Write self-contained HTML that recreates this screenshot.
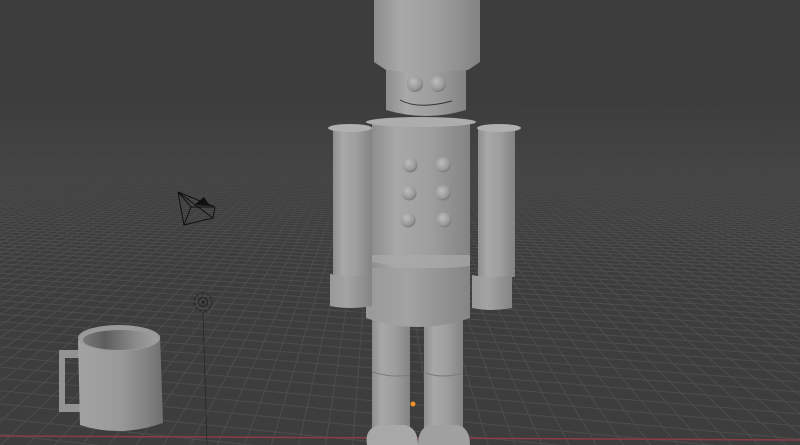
<!DOCTYPE html>
<html><head><meta charset="utf-8"><style>
html,body{margin:0;padding:0;background:#3d3d3d;width:800px;height:445px;overflow:hidden}
svg{display:block;position:absolute;left:0;top:0;overflow:hidden}
</style></head><body>
<svg id="s" width="800" height="445" viewBox="0 0 800 445" xmlns="http://www.w3.org/2000/svg">
<defs>
<linearGradient id="fg" gradientUnits="userSpaceOnUse" x1="0" y1="95" x2="0" y2="240">
<stop offset="0" stop-color="#fff" stop-opacity="0"/><stop offset="1" stop-color="#fff" stop-opacity="1"/></linearGradient>
<mask id="m"><rect x="0" y="0" width="800" height="445" fill="url(#fg)"/></mask>
<linearGradient id="cyl" x1="0" y1="0" x2="1" y2="0">
<stop offset="0" stop-color="#8e8e8e"/><stop offset="0.25" stop-color="#a8a8a8"/><stop offset="0.6" stop-color="#9e9e9e"/><stop offset="1" stop-color="#838383"/></linearGradient>
<linearGradient id="cyl2" x1="0" y1="0" x2="1" y2="0">
<stop offset="0" stop-color="#999"/><stop offset="0.4" stop-color="#a3a3a3"/><stop offset="1" stop-color="#858585"/></linearGradient>
<linearGradient id="mug" x1="0" y1="0" x2="1" y2="0">
<stop offset="0" stop-color="#a3a3a3"/><stop offset="0.5" stop-color="#999"/><stop offset="0.8" stop-color="#838383"/><stop offset="1" stop-color="#6f6f6f"/></linearGradient>
<linearGradient id="mugin" x1="0" y1="0" x2="1" y2="0">
<stop offset="0" stop-color="#777"/><stop offset="0.3" stop-color="#5e5e5e"/><stop offset="0.7" stop-color="#8a8a8a"/><stop offset="1" stop-color="#a0a0a0"/></linearGradient>
<radialGradient id="btn" cx="0.4" cy="0.35" r="0.7"><stop offset="0" stop-color="#bdbdbd"/><stop offset="0.7" stop-color="#989898"/><stop offset="1" stop-color="#707070"/></radialGradient>
</defs>
<g id="grid" mask="url(#m)" stroke="#4d4d4d" stroke-width="1"></g>
<line x1="0" y1="436" x2="800" y2="440" stroke="#8a3c48" stroke-width="1.5"/>
<line x1="203" y1="312" x2="207" y2="445" stroke="#2a2a2a" stroke-width="0.8"/>
<g fill="none" stroke="#111" stroke-width="1">
<path d="M178 192 L191 207 L215 207 Z M178 192 L184 225 L213 218 L215 207 M178 192 L213 218 M191 207 L184 225"/>
</g>
<path d="M194 205 L204 197 L210 206 Z" fill="#111"/>
<g fill="none" stroke="#222" stroke-width="1"><circle cx="203" cy="302" r="9" stroke-dasharray="3 2"/><circle cx="203" cy="302" r="4.5"/></g>
<circle cx="203" cy="302" r="1.5" fill="#222"/>
<path d="M59 350 H80 V412 H59 Z M65 358 V404 H80 V358 Z" fill="#939393" fill-rule="evenodd"/>
<path d="M78 340 L80 425 Q120 438 163 423 L160 335 Z" fill="url(#mug)"/>
<ellipse cx="119" cy="338" rx="41" ry="13" fill="#9a9a9a"/>
<ellipse cx="120" cy="340" rx="37" ry="10" fill="url(#mugin)"/>
<rect x="372" y="320" width="38" height="110" fill="url(#cyl)"/>
<rect x="424" y="320" width="39" height="110" fill="url(#cyl)"/>
<path d="M373 372 Q391 378 410 375" stroke="#7a7a7a" fill="none"/>
<path d="M425 373 Q444 379 463 373" stroke="#7a7a7a" fill="none"/>
<path d="M367 445 Q364 428 380 425 H405 Q418 428 418 445 Z" fill="#a8a8a8"/>
<path d="M418 445 Q418 428 430 425 H458 Q470 428 470 445 Z" fill="#a0a0a0"/>
<circle cx="413" cy="404" r="2.5" fill="#f0902a"/>
<path d="M366 262 H470 V318 Q418 336 366 318 Z" fill="url(#cyl2)"/>
<rect x="372" y="122" width="98" height="146" fill="url(#cyl)"/>
<path d="M372 255 H470 V266 Q420 272 372 262 Z" fill="#aaa" opacity="0.7"/>
<ellipse cx="421" cy="122" rx="55" ry="5" fill="#adadad"/>
<rect x="333" y="128" width="39" height="148" fill="url(#cyl)"/>
<ellipse cx="350" cy="128" rx="22" ry="4" fill="#b0b0b0"/>
<path d="M330 274 Q350 278 372 274 V306 Q350 310 330 306 Z" fill="url(#cyl2)"/>
<rect x="478" y="129" width="37" height="148" fill="url(#cyl)"/>
<ellipse cx="499" cy="128" rx="22" ry="4" fill="#b0b0b0"/>
<path d="M472 275 Q492 279 512 275 V308 Q492 312 472 308 Z" fill="url(#cyl2)"/>
<g fill="url(#btn)">
<circle cx="410" cy="165" r="7.5"/><circle cx="443" cy="165" r="7.5"/>
<circle cx="409" cy="193" r="7.5"/><circle cx="443" cy="193" r="7.5"/>
<circle cx="408" cy="220" r="7.5"/><circle cx="444" cy="220" r="7.5"/>
</g>
<path d="M386 68 H466 V110 Q426 122 386 110 Z" fill="url(#cyl)"/>
<circle cx="415" cy="84" r="8" fill="url(#btn)"/><circle cx="438" cy="84" r="8" fill="url(#btn)"/>
<path d="M400 100 Q418 110 452 101" stroke="#333" stroke-width="1" fill="none"/>
<path d="M374 0 H480 V62 L468 70 Q426 74 386 70 L374 62 Z" fill="url(#cyl)"/>
</svg>
<script>
(function(){
var g=document.getElementById('grid'),ns='http://www.w3.org/2000/svg';
var Y0=85,f=600,h=13.5,cx=274,th=-10*Math.PI/180,c=Math.cos(th),s=Math.sin(th);
function P(u,v){var X=u*c-v*s,D=u*s+v*c;return [cx+f*X/D,Y0+f*h/D,D];}
function line(a,b){var l=document.createElementNS(ns,'line');l.setAttribute('x1',a[0].toFixed(1));l.setAttribute('y1',a[1].toFixed(1));l.setAttribute('x2',b[0].toFixed(1));l.setAttribute('y2',b[1].toFixed(1));g.appendChild(l);}
for(var k=-300;k<=300;k++){
 var pts=[];for(var v=-400;v<=400;v+=1){var p=P(k,v);if(p[2]>5)pts.push(p);}
 if(pts.length>1)line(pts[0],pts[pts.length-1]);
 pts=[];for(var u=-400;u<=400;u+=1){var p=P(u,k);if(p[2]>5)pts.push(p);}
 if(pts.length>1)line(pts[0],pts[pts.length-1]);
}
})();
</script>
</body></html>
